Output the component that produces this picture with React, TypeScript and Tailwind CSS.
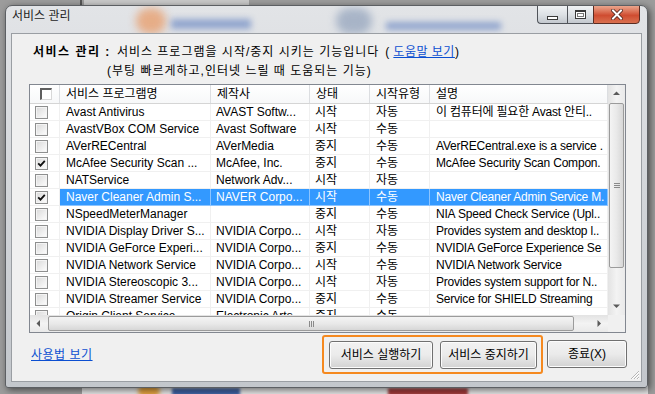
import React from "react";

const rows = [
  { name: "Avast Antivirus", maker: "AVAST Softw...", state: "시작", type: "자동", desc: "이 컴퓨터에 필요한 Avast 안티..", checked: false },
  { name: "AvastVBox COM Service", maker: "Avast Software", state: "시작", type: "수동", desc: "", checked: false },
  { name: "AVerRECentral", maker: "AVerMedia", state: "중지", type: "수동", desc: "AVerRECentral.exe is a service .", checked: false },
  { name: "McAfee Security Scan ...", maker: "McAfee, Inc.", state: "중지", type: "수동", desc: "McAfee Security Scan Compon.", checked: true },
  { name: "NATService", maker: "Network Adv...", state: "시작", type: "자동", desc: "", checked: false },
  { name: "Naver Cleaner Admin S...", maker: "NAVER Corpo...", state: "시작", type: "수동", desc: "Naver Cleaner Admin Service M.", checked: true, selected: true },
  { name: "NSpeedMeterManager", maker: "", state: "중지", type: "수동", desc: "NIA Speed Check Service (Upl..", checked: false },
  { name: "NVIDIA Display Driver S...", maker: "NVIDIA Corpo...", state: "시작", type: "자동", desc: "Provides system and desktop l..", checked: false },
  { name: "NVIDIA GeForce Experi...", maker: "NVIDIA Corpo...", state: "중지", type: "수동", desc: "NVIDIA GeForce Experience Se", checked: false },
  { name: "NVIDIA Network Service", maker: "NVIDIA Corpo...", state: "시작", type: "수동", desc: "NVIDIA Network Service", checked: false },
  { name: "NVIDIA Stereoscopic 3...", maker: "NVIDIA Corpo...", state: "시작", type: "자동", desc: "Provides system support for N..", checked: false },
  { name: "NVIDIA Streamer Service", maker: "NVIDIA Corpo...", state: "중지", type: "수동", desc: "Service for SHIELD Streaming", checked: false },
  { name: "Origin Client Service", maker: "Electronic Arts", state: "중지", type: "수동", desc: "", checked: false },
];

function Check({ checked }: { checked: boolean }) {
  return (
    <div className="w-[13px] h-[13px] border border-[#8e8f8f] bg-white flex items-center justify-center">
      <div className="w-[11px] h-[11px] border border-[#f4f4f4] bg-linear-to-br from-[#dcdcdc] to-[#fbfbfb] flex items-center justify-center">
        {checked && (
          <svg width="9" height="9" viewBox="0 0 9 9">
            <path d="M1.2 4.4 L3.5 6.7 L7.8 1.8" stroke="#111" strokeWidth="1.8" fill="none" />
          </svg>
        )}
      </div>
    </div>
  );
}

function Arrow({ dir }: { dir: "up" | "down" | "left" | "right" }) {
  const d = {
    up: "M0 4 L3.5 0.5 L7 4 Z",
    down: "M0 0.5 L3.5 4 L7 0.5 Z",
    left: "M4 0 L0.5 3.5 L4 7 Z",
    right: "M0.5 0 L4 3.5 L0.5 7 Z",
  }[dir];
  const horiz = dir === "left" || dir === "right";
  return (
    <svg width={horiz ? 5 : 7} height={horiz ? 7 : 5} viewBox={horiz ? "0 0 5 7" : "0 0 7 5"}>
      <path d={d} fill="#5a5a5a" />
    </svg>
  );
}

function Btn({ label, w }: { label: string; w: string }) {
  return (
    <div className={`${w} h-[28px] rounded-[3px] border border-[#707070] bg-linear-to-b from-[#f2f2f2] via-[#ebebeb] via-50% to-[#d2d2d2] shadow-[inset_0_0_0_1px_#fcfcfc] flex items-center justify-center text-[12px] text-black`}>
      {label}
    </div>
  );
}

function App() {
  const cols = ["w-[151px]", "w-[99px]", "w-[60px]", "w-[60px]", "w-[178px]"];
  const pads = ["pl-[6px]", "pl-[5px]", "pl-[5px]", "pl-[6px]", "pl-[6px] tracking-[-0.2px]"];
  return (
    <div className="relative w-[655px] h-[394px] overflow-hidden bg-[#9c9c9c] pt-[5px] pl-[5px] font-['Liberation_Sans','Noto_Sans_CJK_KR',sans-serif] text-[12px]">
      {/* blurred desktop behind the window */}
      <div className="absolute left-[80px] top-0 w-[2px] h-[6px] bg-[#555]" />
      <div className="absolute left-[84px] top-0 w-[165px] h-[6px] bg-[#c9c9c9]" />
      <div className="absolute left-[82px] top-[384px] w-[566px] h-[10px] bg-[#e4e4e4]" />
      <div className="absolute left-[138px] top-[384px] w-[22px] h-[14px] rounded-full bg-[#e0a040] blur-[2px]" />
      <div className="absolute left-[172px] top-[388px] w-[68px] h-[8px] bg-[#3d5fa0] blur-[1.5px]" />
      <div className="absolute left-[388px] top-[388px] w-[80px] h-[8px] bg-[#a03a3a] blur-[1.5px]" />

      <div className="relative z-10 w-[643px] h-[383px] rounded-t-[7px] rounded-b-[3px] border border-[#5c5f63] bg-linear-to-b from-[#e2e4e7] to-[#c3c7cc] shadow-[2px_2px_7px_rgba(0,0,0,0.55)] overflow-hidden px-[5px] pb-[5px] flex flex-col">
        {/* glass showing blurred content */}
        <div className="absolute left-[130px] top-[2px] w-[30px] h-[26px] rounded-full bg-[#e8a070] blur-[4px] opacity-80" />
        <div className="absolute left-[165px] top-[13px] w-[80px] h-[10px] bg-[#7d96c8] blur-[3px] opacity-80" />
        <div className="absolute left-[330px] top-[2px] w-[36px] h-[26px] rounded-full bg-[#9aa9c0] blur-[4px] opacity-80" />
        <div className="absolute left-[380px] top-[16px] w-[115px] h-[8px] bg-[#7d96c8] blur-[3px] opacity-80" />

        {/* title bar */}
        <div className="relative h-[27px] flex items-start justify-between">
          <div className="pl-[1px] pt-[1px] leading-[19px] text-[#1e1e1e]">서비스 관리</div>
          <div className="flex h-[19px] -mt-[1px] mr-[2px]">
            <div className="w-[30px] border border-[#50545a] border-r-0 rounded-bl-[4px] bg-linear-to-b from-[#f0f2f4] via-[#dde1e5] to-[#c3c8ce] flex items-end justify-center pb-[3px]">
              <div className="w-[11px] h-[4px] border border-[#3a3a3a] bg-white" />
            </div>
            <div className="w-[26px] border border-[#50545a] border-r-0 bg-linear-to-b from-[#f0f2f4] via-[#dde1e5] to-[#c3c8ce] flex items-center justify-center">
              <div className="w-[11px] h-[9px] border border-[#3a3a3a] border-t-[2px] bg-white flex items-center justify-center">
                <div className="w-[7px] h-[4px] border border-[#777] bg-white" />
              </div>
            </div>
            <div className="w-[47px] border border-[#5a2c22] rounded-br-[4px] bg-linear-to-b from-[#eaa58c] via-[#cf4c30] via-55% to-[#d9704f] flex items-center justify-center">
              <svg width="12" height="11" viewBox="0 0 12 11">
                <path d="M2 1.5 L10 9.5 M10 1.5 L2 9.5" stroke="#4a2018" strokeWidth="3.6" strokeLinecap="square" />
                <path d="M2 1.5 L10 9.5 M10 1.5 L2 9.5" stroke="#fff" strokeWidth="2" strokeLinecap="square" />
              </svg>
            </div>
          </div>
        </div>

        {/* client area */}
        <div className="relative w-[631px] h-[349px] border border-[#9a9ea3] bg-[#f0f0f0] flex flex-col text-black">
          <div className="pt-[9px] pl-[21px] h-[28px] leading-[19px] flex whitespace-nowrap">
            <span className="font-bold tracking-[1.5px]">서비스 관리 :</span>
            <span className="ml-[6px] tracking-[1px]">서비스 프로그램을 시작/중지 시키는 기능입니다</span>
            <span className="ml-[6px]">(</span>
            <span className="ml-[4px] text-[#0b4fd1] underline tracking-[0.5px]">도움말 보기</span>
            <span>)</span>
          </div>
          <div className="pl-[95px] h-[19px] leading-[19px] tracking-[1px]">(부팅 빠르게하고,인터넷 느릴 때 도움되는 기능)</div>

          {/* list view */}
          <div className="ml-[17px] mt-[3px] w-[597px] h-[249px] border border-[#828790] bg-white flex flex-col">
            <div className="h-[230px] flex">
              <div className="w-[578px] flex flex-col overflow-hidden">
                <div className="h-[19px] flex border-b border-[#d5d5d5] bg-linear-to-b from-white to-[#f7f8f9] shrink-0">
                  <div className="w-[30px] border-r border-[#dcdee1] flex items-center pl-[10px]">
                    <div className="w-[12px] h-[12px] border-t-2 border-l-2 border-t-[#5f5f5f] border-l-[#5f5f5f] border-r border-b border-r-[#d8d8d8] border-b-[#d8d8d8] bg-white" />
                  </div>
                  {["서비스 프로그램명", "제작사", "상태", "시작유형", "설명"].map((h, i) => (
                    <div key={h} className={`${cols[i]} pl-[6px] border-r border-[#dcdee1] leading-[18px] whitespace-nowrap overflow-hidden`}>
                      {h}
                    </div>
                  ))}
                </div>
                {rows.map((r) => (
                  <div key={r.name} className="h-[17px] flex shrink-0">
                    <div className="w-[30px] border-r border-b border-[#f0f0f0] flex items-center pl-[5px]">
                      <Check checked={r.checked} />
                    </div>
                    <div className={`flex ${r.selected ? "bg-[#3399ff] text-white" : ""}`}>
                      {[r.name, r.maker, r.state, r.type, r.desc].map((c, i) => (
                        <div
                          key={i}
                          className={`${cols[i]} ${pads[i]} border-r border-b ${r.selected ? "border-[#8cc4ff]" : "border-[#f0f0f0]"} leading-[16px] whitespace-nowrap overflow-hidden`}
                        >
                          {c}
                        </div>
                      ))}
                    </div>
                  </div>
                ))}
              </div>
              {/* vertical scrollbar */}
              <div className="w-[17px] flex flex-col bg-linear-to-r from-[#e3e3e3] via-[#f3f3f3] to-[#e9e9e9]">
                <div className="h-[17px] flex items-center justify-center"><Arrow dir="up" /></div>
                <div className="mt-[1px] h-[165px] mx-[1px] rounded-[2px] border border-[#9b9b9b] bg-linear-to-r from-[#f4f4f4] via-[#e9e9e9] to-[#d7d7d7] flex flex-col items-center justify-center gap-[1px]">
                  <div className="w-[6px] h-[1px] bg-[#8a8a8a]" />
                  <div className="w-[6px] h-[1px] bg-[#8a8a8a]" />
                  <div className="w-[6px] h-[1px] bg-[#8a8a8a]" />
                </div>
                <div className="flex-1" />
                <div className="h-[17px] flex items-center justify-center"><Arrow dir="down" /></div>
              </div>
            </div>
            {/* horizontal scrollbar */}
            <div className="h-[17px] flex">
              <div className="w-[578px] flex bg-linear-to-b from-[#e3e3e3] via-[#f3f3f3] to-[#e9e9e9]">
                <div className="w-[17px] flex items-center justify-center"><Arrow dir="left" /></div>
                <div className="ml-[1px] w-[526px] my-[1px] rounded-[2px] border border-[#9b9b9b] bg-linear-to-b from-[#f4f4f4] via-[#e9e9e9] to-[#d7d7d7] flex items-center justify-center gap-[1px]">
                  <div className="w-[1px] h-[6px] bg-[#8a8a8a]" />
                  <div className="w-[1px] h-[6px] bg-[#8a8a8a]" />
                  <div className="w-[1px] h-[6px] bg-[#8a8a8a]" />
                </div>
                <div className="flex-1" />
                <div className="w-[17px] flex items-center justify-center"><Arrow dir="right" /></div>
              </div>
              <div className="w-[17px] bg-[#f0f0f0]" />
            </div>
          </div>

          {/* bottom bar */}
          <div className="mt-[2px] flex items-start">
            <div className="w-[310px] pl-[19px] pt-[11px] leading-[19px]">
              <span className="text-[#0b4fd1] underline tracking-[0.5px]">사용법 보기</span>
            </div>
            <div className="w-[221px] h-[39px] border-2 border-[#f5891f] rounded-[3px] flex items-center pl-[5px] gap-[7px]">
              <Btn label="서비스 실행하기" w="w-[104px]" />
              <Btn label="서비스 중지하기" w="w-[97px]" />
            </div>
            <div className="ml-[4px] mt-[5px]">
              <Btn label="종료(X)" w="w-[80px]" />
            </div>
          </div>

          {/* resize grip */}
          <svg className="absolute right-[1px] bottom-[1px]" width="12" height="12" viewBox="0 0 12 12">
            <path d="M11 3 L3 11 M11 6 L6 11 M11 9 L9 11" stroke="#b5b5b5" strokeWidth="1" />
            <path d="M11 4 L4 11 M11 7 L7 11 M11 10 L10 11" stroke="#ffffff" strokeWidth="1" />
          </svg>
        </div>
      </div>
    </div>
  );
}

export default App;
